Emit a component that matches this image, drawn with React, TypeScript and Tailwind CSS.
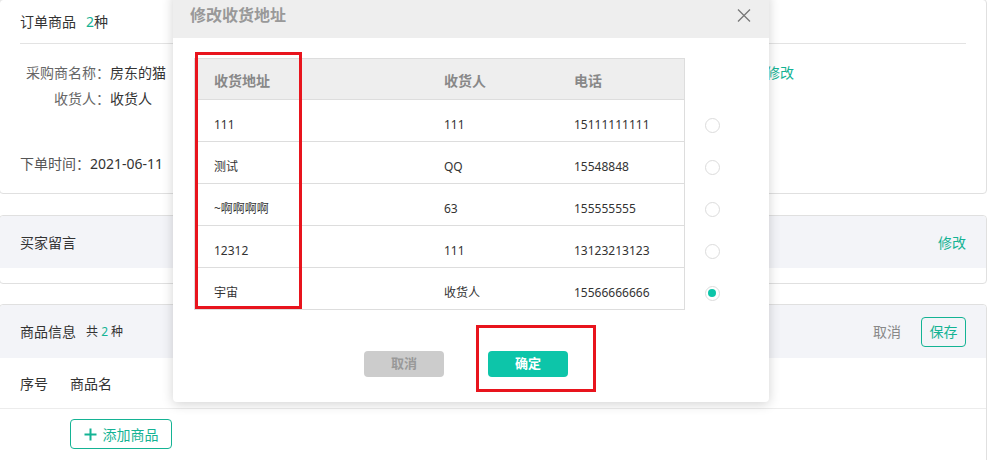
import React from "react";

const rows = [
  { addr: "111", name: "111", phone: "15111111111", sel: false },
  { addr: "测试", name: "QQ", phone: "15548848", sel: false },
  { addr: "~啊啊啊啊", name: "63", phone: "155555555", sel: false },
  { addr: "12312", name: "111", phone: "13123213123", sel: false },
  { addr: "宇宙", name: "收货人", phone: "15566666666", sel: true },
];

export default function App() {
  return (
    <div className="relative w-[992px] h-[460px] overflow-hidden bg-white font-['Noto_Sans','Noto_Sans_CJK_SC',sans-serif] text-[14px] text-[#333]">
      <div className="-mt-px -ml-px w-[988px] flex flex-col">
        {/* Card 1 */}
        <div className="h-[195px] border border-[#e0e0e0] rounded-[4px] bg-white">
          <div className="mx-5 h-[44px] border-b border-[#e3e3e3] flex items-center">
            <span>订单商品</span>
            <span className="ml-[10px] text-[#14b394]">2</span>
            <span>种</span>
          </div>
          <div className="mt-[17px] flex h-[22px] items-center pl-5">
            <div className="w-[746px] flex items-center">
              <span className="w-[90px] text-right text-[#666]">采购商名称：</span>
              <span>房东的猫</span>
            </div>
            <span className="text-[#14b394]">修改</span>
          </div>
          <div className="mt-[4px] flex h-[22px] items-center pl-5">
            <span className="w-[90px] text-right text-[#666]">收货人：</span>
            <span>收货人</span>
          </div>
          <div className="mt-[43px] flex h-[22px] items-center pl-5">
            <span className="text-[#555]">下单时间：</span>
            <span>2021-06-11</span>
          </div>
        </div>

        {/* Card 2 */}
        <div className="mt-[21px] h-[69px] border border-[#e0e0e0] rounded-[4px] bg-white">
          <div className="h-[52px] bg-[#f3f4f8] rounded-t-[4px] flex items-center justify-between px-5">
            <span>买家留言</span>
            <span className="text-[#14b394]">修改</span>
          </div>
        </div>

        {/* Card 3 */}
        <div className="mt-[20px] h-[200px] border border-[#e0e0e0] rounded-[4px] bg-white">
          <div className="h-[53px] bg-[#f3f4f8] rounded-t-[4px] flex items-center justify-between px-5">
            <div className="flex items-center">
              <span>商品信息</span>
              <span className="ml-[10px] text-[12px]">
                共 <span className="text-[#14b394]">2</span> 种
              </span>
            </div>
            <div className="flex items-center gap-5">
              <span className="text-[#888]">取消</span>
              <button className="h-[30px] w-[45px] rounded-[4px] border border-[#14b394] text-[#14b394] text-[14px] flex items-center justify-center">
                保存
              </button>
            </div>
          </div>
          <div className="h-[51px] border-b border-[#ececec] flex items-center px-5">
            <span className="w-[50px]">序号</span>
            <span>商品名</span>
          </div>
          <div className="mt-[10px] ml-[70px]">
            <button className="h-[30px] w-[102px] rounded-[4px] border border-[#14b394] text-[#14b394] flex items-center justify-center gap-[6px]">
              <svg width="13" height="13" viewBox="0 0 13 13">
                <path d="M6.5 0.5V12.5M0.5 6.5H12.5" stroke="#14b394" strokeWidth="2" />
              </svg>
              <span>添加商品</span>
            </button>
          </div>
        </div>
      </div>

      {/* Modal */}
      <div className="absolute left-[173px] top-[-8px] w-[596px] h-[410px] bg-white rounded-b-[4px] shadow-[0_2px_12px_rgba(0,0,0,0.18)]">
        <div className="h-[46px] bg-[#eeeeee] flex items-center justify-between pl-[17px] pr-[18px]">
          <span className="text-[16px] font-bold text-[#999]">修改收货地址</span>
          <svg width="14" height="13" viewBox="0 0 14 13">
            <path d="M1 0.5L13 12.5M13 0.5L1 12.5" stroke="#777" strokeWidth="1.3" />
          </svg>
        </div>
        <div className="pt-[20px] pl-[21px]">
          <div className="flex">
            <div className="w-[491px] h-[42px] border border-[#dddddd] bg-[#eeeeee] grid grid-cols-[230px_130px_129px] items-center pt-[2px] text-[14px] font-bold text-[#888]">
              <span className="pl-[19px]">收货地址</span>
              <span className="pl-[19px]">收货人</span>
              <span className="pl-[19px]">电话</span>
            </div>
          </div>
          {rows.map((r, i) => (
            <div key={i} className="flex">
              <div className="w-[491px] h-[42px] border-l border-r border-b border-[#dddddd] grid grid-cols-[230px_130px_129px] items-center pt-[8px] text-[12px] text-[#333]">
                <span className="pl-[19px]">{r.addr}</span>
                <span className="pl-[19px]">{r.name}</span>
                <span className="pl-[19px]">{r.phone}</span>
              </div>
              <div className="w-[54px] h-[42px] flex items-center justify-center pt-[8px]">
                <span className="w-[15px] h-[15px] rounded-full border border-[#dcdcdc] bg-white flex items-center justify-center">
                  {r.sel && <span className="w-[8px] h-[8px] rounded-full bg-[#0dc5a9]" />}
                </span>
              </div>
            </div>
          ))}
        </div>
        <div className="mt-[41px] ml-[191px] flex gap-[44px]">
          <button className="w-[80px] h-[26px] rounded-[4px] bg-[#cccccc] text-[#999] text-[13px] font-bold flex items-center justify-center">
            取消
          </button>
          <button className="w-[80px] h-[26px] rounded-[4px] bg-[#0dc5a9] text-white text-[13px] font-bold flex items-center justify-center">
            确定
          </button>
        </div>
      </div>

      {/* Red annotation boxes */}
      <div className="absolute left-[195px] top-[52px] w-[107px] h-[257px] border-[3px] border-[#e8141d]" />
      <div className="absolute left-[476px] top-[325px] w-[120px] h-[67px] border-[3px] border-[#e8141d]" />
    </div>
  );
}
